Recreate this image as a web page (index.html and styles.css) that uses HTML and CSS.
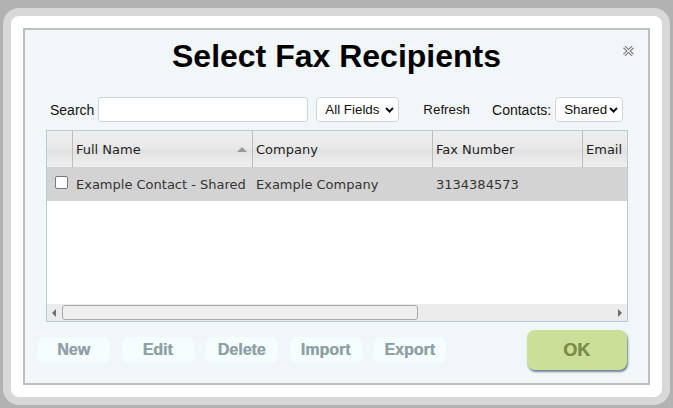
FILE: index.html
```html
<!DOCTYPE html>
<html lang="en">
<head>
<meta charset="utf-8">
<title>Select Fax Recipients</title>
<link rel="stylesheet" href="styles.css">
</head>
<body>
<div class="dialog">
  <div class="panel">
    <button class="close" aria-label="Close">
      <svg width="11" height="10" viewBox="0 0 11 10">
        <path d="M1.2 1 L9.8 9 M9.8 1 L1.2 9" stroke="#6f6f6f" stroke-width="3.2" fill="none"/>
        <path d="M1.2 1 L9.8 9 M9.8 1 L1.2 9" stroke="#f1f6f9" stroke-width="1.2" fill="none"/>
      </svg>
    </button>
    <h1 class="title">Select Fax Recipients</h1>
    <div class="toolbar">
      <label class="lbl">Search</label>
      <input class="search" type="text">
      <div class="select sel-fields"><span>All Fields</span>
        <svg class="chev" width="9" height="6" viewBox="0 0 9 6"><path d="M1 1 L4.5 4.5 L8 1" stroke="#111" stroke-width="2" fill="none"/></svg>
      </div>
      <button class="refresh">Refresh</button>
      <label class="lbl contacts">Contacts:</label>
      <div class="select sel-shared"><span>Shared</span>
        <svg class="chev" width="9" height="6" viewBox="0 0 9 6"><path d="M1 1 L4.5 4.5 L8 1" stroke="#111" stroke-width="2" fill="none"/></svg>
      </div>
    </div>
    <div class="grid">
      <div class="grid-inner">
        <div class="row head">
          <div class="cell c-check"></div>
          <div class="cell c-name">Full Name<span class="sort"></span></div>
          <div class="cell c-company">Company</div>
          <div class="cell c-fax">Fax Number</div>
          <div class="cell c-email">Email</div>
        </div>
        <div class="row data">
          <div class="cell c-check"><input class="chk" type="checkbox"></div>
          <div class="cell c-name">Example Contact - Shared</div>
          <div class="cell c-company">Example Company</div>
          <div class="cell c-fax">3134384573</div>
          <div class="cell c-email"></div>
        </div>
        <div class="empty"></div>
      </div>
      <div class="hscroll">
        <span class="arrow left"></span>
        <div class="track"><div class="thumb"></div></div>
        <span class="arrow right"></span>
      </div>
    </div>
    <div class="actions">
      <button class="act">New</button>
      <button class="act">Edit</button>
      <button class="act">Delete</button>
      <button class="act">Import</button>
      <button class="act">Export</button>
      <button class="ok">OK</button>
    </div>
  </div>
</div>
</body>
</html>
```
FILE: styles.css
```css
html, body {
  margin: 0;
  padding: 0;
}
body {
  background: #b2b2b2;
  padding: 8px 3px 3px 3px;
  font-family: "Liberation Sans", Arial, sans-serif;
  width: 667px;
  height: 397px;
}
.dialog {
  box-sizing: border-box;
  width: 667px;
  height: 397px;
  border: 8px solid #d8d8d8;
  border-radius: 16px;
  background: #ffffff;
  padding: 12px;
}
.panel {
  position: relative;
  box-sizing: border-box;
  height: 357px;
  border: 2px solid #bfbfbf;
  background: #f1f6f9;
  display: flex;
  flex-direction: column;
}
.close {
  position: absolute;
  top: 16px;
  right: 14px;
  border: 0;
  background: none;
  padding: 0;
  width: 11px;
  height: 10px;
  line-height: 0;
}
.title {
  margin: 8px 0 0 0;
  font-size: 32px;
  line-height: 37px;
  font-weight: bold;
  text-align: center;
  color: #000;
}
.toolbar {
  display: flex;
  align-items: center;
  height: 25px;
  margin-top: 22px;
  padding-left: 25px;
}
.lbl {
  font-size: 14px;
  color: #111;
}
.search {
  box-sizing: border-box;
  margin: 0 0 0 4px;
  width: 210px;
  height: 25px;
  border: 1px solid #cbd5da;
  border-radius: 3px;
  background: #fff;
  padding: 0 4px;
}
.select {
  box-sizing: border-box;
  height: 25px;
  border: 1px solid #cfd7dc;
  border-radius: 4px;
  background: #fff;
  display: flex;
  align-items: center;
  font-size: 13.333px;
  color: #111;
  padding-left: 8px;
}
.select .chev {
  margin-left: auto;
  margin-right: 4px;
}
.sel-fields {
  width: 83px;
  margin-left: 8px;
}
.sel-shared {
  width: 68px;
  margin-left: 4px;
}
.refresh {
  margin-left: 24px;
  border: 0;
  background: none;
  padding: 0;
  font-family: "Liberation Sans", Arial, sans-serif;
  font-size: 13.333px;
  color: #111;
}
.contacts {
  margin-left: 22px;
}
.grid {
  box-sizing: border-box;
  margin: 8px 0 0 21px;
  width: 582px;
  height: 192px;
  border: 1px solid #b7cad5;
  background: #fff;
  display: flex;
  flex-direction: column;
}
.grid-inner {
  flex: 1;
  overflow: hidden;
}
.row {
  display: flex;
  width: 760px;
  font-family: "DejaVu Sans", Verdana, sans-serif;
  font-size: 13px;
}
.head {
  height: 36px;
  line-height: 37px;
  color: #1e1e1e;
  background: linear-gradient(#ededed 0%, #e9e9e9 45%, #e2e2e2 55%, #efefef 100%);
}
.head .cell {
  border-right: 1px solid #bcbcbc;
}
.data {
  height: 34px;
  line-height: 36px;
  background: #d3d3d3;
  color: #333;
}
.data .cell {
  border-right: 1px solid transparent;
}
.cell {
  position: relative;
  white-space: nowrap;
  overflow: hidden;
  padding-left: 3px;
  box-sizing: border-box;
}
.c-check { width: 26px; padding: 0; }
.c-name { width: 180px; }
.c-company { width: 180px; }
.c-fax { width: 150px; }
.c-email { width: 180px; }
.sort {
  position: absolute;
  right: 5px;
  top: 16px;
  width: 0;
  height: 0;
  border-left: 5px solid transparent;
  border-right: 5px solid transparent;
  border-bottom: 5px solid #9a9a9a;
}
.chk {
  appearance: none;
  -webkit-appearance: none;
  box-sizing: border-box;
  width: 13px;
  height: 13px;
  margin: 9px 0 0 8px;
  border: 1px solid #777;
  border-radius: 2px;
  background: #fff;
  display: block;
}
.empty {
  height: 103px;
}
.hscroll {
  height: 17px;
  background: #ececec;
  display: flex;
  align-items: center;
}
.arrow {
  width: 0;
  height: 0;
  border-top: 4px solid transparent;
  border-bottom: 4px solid transparent;
}
.arrow.left {
  border-right: 4px solid #6e6e6e;
  margin-left: 5px;
}
.arrow.right {
  border-left: 4px solid #6e6e6e;
  margin-right: 5px;
}
.track {
  flex: 1;
  height: 15px;
  margin: 0 4px 0 6px;
}
.thumb {
  box-sizing: border-box;
  width: 356px;
  height: 15px;
  border: 1px solid #a8a8a8;
  border-radius: 3px;
  background: #efefef;
}
.actions {
  display: flex;
  align-items: center;
  height: 40px;
  margin: 8px 21px 0 13px;
}
.act {
  width: 72px;
  height: 26px;
  margin-right: 12px;
  border: 0;
  border-radius: 7px;
  background: #f5fcfd;
  font-family: "Liberation Sans", Arial, sans-serif;
  font-size: 16px;
  font-weight: bold;
  color: #8aa0a6;
  text-shadow: -0.5px -0.5px 0 rgba(110, 100, 80, 0.45);
  padding: 0;
}
.ok {
  margin-left: auto;
  width: 100px;
  height: 40px;
  border: 0;
  border-radius: 8px;
  background: #cbdf99;
  box-shadow: 1px 2px 2px rgba(70, 95, 115, 0.75);
  font-family: "Liberation Sans", Arial, sans-serif;
  font-size: 18px;
  font-weight: bold;
  color: #7b8a45;
  text-shadow: -0.5px -0.5px 0 rgba(90, 80, 50, 0.4);
  padding: 0;
}
```
